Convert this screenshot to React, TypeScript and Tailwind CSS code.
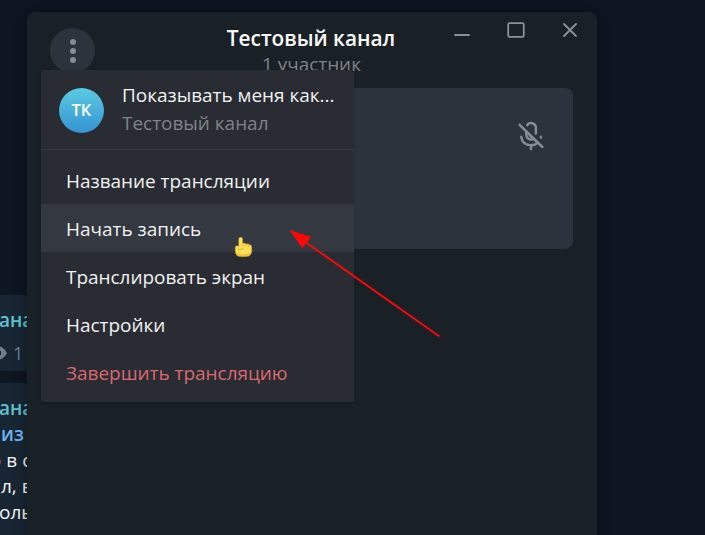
import React from "react";

const menuItems = [
  { label: "Название трансляции" },
  { label: "Начать запись", active: true },
  { label: "Транслировать экран" },
  { label: "Настройки" },
  { label: "Завершить трансляцию", danger: true },
];

function ChatBackground() {
  return (
    <div className="flex h-full w-[80px] flex-col gap-3 overflow-hidden pt-[295px] whitespace-nowrap">
      <div className="h-[76px] shrink-0 bg-[#182533]">
        <div className="-ml-px pt-3 text-[19px] leading-[26px] font-semibold text-[#5cc3d0]">анал</div>
        <div className="mt-[7px] flex h-[26px] items-center text-[#6d7f8f]">
          <svg className="-ml-[11px] h-[14px] w-[18px]" viewBox="0 0 18 14">
            <path d="M0 7C5-2 13-2 18 7C13 16 5 16 0 7Z" fill="currentColor" />
            <circle cx="9" cy="7" r="3.2" fill="#182533" />
            <circle cx="9" cy="7" r="1.5" fill="currentColor" />
          </svg>
          <span className="ml-[6px] text-[18px]">1</span>
        </div>
      </div>
      <div className="h-[160px] shrink-0 bg-[#182533] pt-3 text-[19px] leading-[26px] text-[#f5f5f5]">
        <div className="-ml-px font-semibold text-[#5cc3d0]">анал</div>
        <div className="ml-[1px] font-semibold text-[#6ab3f3]">из</div>
        <div className="-ml-[10px]"><span className="text-[#c25560]">о</span> в с</div>
        <div className="ml-px">л, в</div>
        <div className="-ml-px">оль</div>
      </div>
    </div>
  );
}

function WindowControls() {
  return (
    <svg className="absolute top-0 right-0 h-9 w-[150px]" viewBox="447 12 150 36" fill="none" stroke="#8b9198">
      <path d="M455 35H469" strokeWidth="1.8" strokeLinecap="round" />
      <rect x="508.2" y="23.2" width="15.6" height="13.6" rx="1.4" strokeWidth="1.8" />
      <path d="M564 24L576 36M576 24L564 36" strokeWidth="1.8" strokeLinecap="round" />
    </svg>
  );
}

function MutedMic() {
  return (
    <svg className="h-[30px] w-[28px]" viewBox="517 121 28 30" fill="none" stroke="#858c95" strokeWidth="2.5" strokeLinecap="round">
      <path d="M527.3 125.2C528.2 123.2 530.4 122.9 532 123.2C534.6 123.7 535.9 125.6 535.9 128V133.4" />
      <path d="M526.3 131.5V134.5C526.3 138.4 529.8 140.3 533.2 139M529.8 134.8L530.8 136.4" />
      <path d="M521.3 136.8C521.8 142.2 525.7 145.2 531 145.2C534 145.2 536 144.2 537.7 142.7" />
      <path d="M540.9 136.8V137.4M531 145.5V149M519.6 124.9L542.4 147" />
    </svg>
  );
}

function Menu() {
  return (
    <div className="absolute top-[58px] left-[14px] h-[332px] w-[313px] overflow-hidden rounded-[3px] bg-[#292c32] whitespace-nowrap shadow-[0_1px_3px_rgba(0,0,0,0.15)]">
      <div className="flex h-[80px] items-start border-b border-[#373b41] pl-[18px]">
        <div className="mt-[18px] flex size-[45px] items-center justify-center rounded-full bg-gradient-to-b from-[#5bcae0] to-[#3594d3] text-[16.5px] font-semibold text-white">ТК</div>
        <div className="mt-[11px] ml-[18px] text-[18.95px] leading-[28px]">
          <div className="text-[#f2f2f2]">Показывать меня как...</div>
          <div className="text-[#808388]">Тестовый канал</div>
        </div>
      </div>
      <div className="pt-[6px] text-[18.95px]">
        {menuItems.map((item) => (
          <div
            key={item.label}
            className={`flex h-12 items-center pt-[2px] pl-[25px] ${item.active ? "bg-[#343840]" : ""} ${item.danger ? "text-[#da6870]" : "text-[#f2f2f2]"}`}
          >
            {item.label}
          </div>
        ))}
      </div>
    </div>
  );
}

function Pointer() {
  return (
    <svg className="absolute top-[236px] left-[234px] h-[22px] w-[19px]" viewBox="0 0 19 22">
      <path d="M4.8 10.2V3C4.8 .8 8.6 .8 8.6 3V7L15.5 8.4Q17.7 9 17.7 11V16Q16.8 20.6 12 20.6H7Q2.5 20.6 1.5 17L1.1 12Q1.3 9.5 3.4 9.8Z" fill="#ffdf58" stroke="#c9951c" strokeWidth=".5" />
      <path d="M8.8 7.5V10.5M12 8V11M15 8.8V11.5M3.6 13Q6 14.5 9.5 12.5" fill="none" stroke="#d9a52a" strokeWidth=".8" />
      <path d="M1.8 16.5Q3 20.3 8 20.3H12Q16 19.8 17.2 16Q12 19 7 18.4Z" fill="#f2bf35" />
    </svg>
  );
}

export default function App() {
  return (
    <main className="relative h-[535px] w-[705px] overflow-hidden bg-[#0e1621] font-['Open_Sans','Noto_Sans',sans-serif]">
      <ChatBackground />
      <section className="absolute top-[12px] left-[27px] h-[540px] w-[570px] rounded-lg bg-[#1a2126] shadow-[0_0_12px_rgba(0,0,0,0.4)]">
        <header className="h-[76px] pt-[12px] text-center whitespace-nowrap">
          <h1 className="pr-[2px] text-[20.8px] leading-[29px] font-semibold text-white">Тестовый канал</h1>
          <p className="-mt-px pr-px text-[18.9px] leading-[24px] text-[#808388]">1 участник</p>
        </header>
        <div className="mr-6 ml-6 flex h-[161px] justify-end rounded-lg bg-[#2c333d] pt-[33px] pr-[28px]">
          <MutedMic />
        </div>
        <div className="absolute top-[16px] left-[23px] flex size-[45px] flex-col items-center justify-center gap-[3px] rounded-full bg-[#2c333d]">
          <i className="size-[6px] rounded-full bg-[#858c95]" />
          <i className="size-[6px] rounded-full bg-[#858c95]" />
          <i className="size-[6px] rounded-full bg-[#858c95]" />
        </div>
        <WindowControls />
        <Menu />
      </section>
      <Pointer />
      <svg className="absolute top-[225px] left-[285px] h-[115px] w-[160px]" viewBox="285 225 160 115">
        <path d="M304 241L439.5 336.5" stroke="#f90808" strokeWidth="2" />
        <path d="M289.5 230L311 236.7L302.5 248.5Z" fill="#f90808" />
      </svg>
    </main>
  );
}
